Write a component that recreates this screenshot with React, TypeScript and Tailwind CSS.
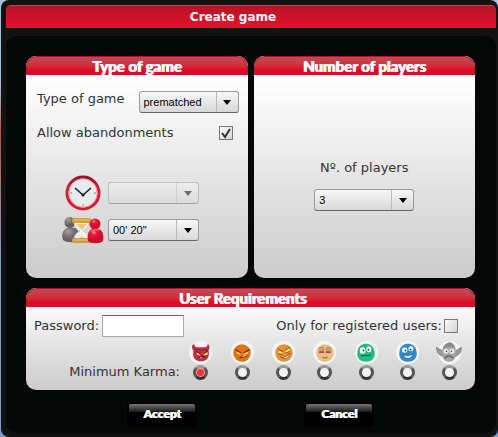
import React, { useState } from "react";

type Face = {
  name: string;
  drawing: React.ReactNode;
};

const karmaFaces: Face[] = [
  {
    name: "Devil",
    drawing: (
      <>
        <path d="M3 9C0 6 1 2 4 1c0 3 1 4 4 4h8c3 0 4-1 4-4 3 2 3 5 1 8 2 8-2 13-9 13S1 17 3 9z" fill="#bf3049" />
        <path d="M4 9c3-2 5-1 8 0 3-1 5-2 8 0" fill="none" stroke="#8f1d33" strokeWidth="1.2" />
        <path d="M7 11l4 2-1 2-3-1zM20 11l-5 2 1 2 4-1z" fill="#ffdf35" />
        <path d="M6 10l5 3M20 9l-5 4M9 18c3-2 6-2 9-1" fill="none" stroke="#6d1023" strokeWidth="1.2" />
        <path d="M11 17l1 2 1-2z" fill="#fff" />
      </>
    ),
  },
  {
    name: "Angry",
    drawing: (
      <>
        <circle cx="12" cy="12" r="10.5" fill="#df7414" />
        <path d="M5 10l6 2-1 2-4-1zM20 10l-6 2 1 2 4-1z" fill="#ffe14a" />
        <path d="M4 8l7 4M21 8l-7 4" stroke="#7b2f08" strokeWidth="1.6" />
        <path d="M9 18c3-2 5 0 9-3" fill="none" stroke="#7b260b" strokeWidth="1.6" />
        <path d="M13 16l4-1" stroke="#fff" />
      </>
    ),
  },
  {
    name: "Mischievous",
    drawing: (
      <>
        <circle cx="12" cy="12" r="10.5" fill="#e2943a" />
        <path d="M6 9l5 2-2 2-4-1zM13 9l5-3 1 4-4 2z" fill="#fff05a" />
        <path d="M5 7l6 4M13 9l6-4M5 13l5 1M14 12l5-2" stroke="#9a3d14" strokeWidth="1.2" />
        <path d="M8 17c5 1 8-1 11-5-1 6-5 9-11 5z" fill="#fff" stroke="#a23f1c" />
      </>
    ),
  },
  {
    name: "Calm",
    drawing: (
      <>
        <circle cx="12" cy="12" r="10.5" fill="#e6bf80" />
        <path d="M5 7h6v4H5zM13 7h6v4h-6z" fill="#cf9676" />
        <path d="M4 7c2-2 5-2 7 0M13 7c2-2 5-2 7 0" fill="none" stroke="#9d6038" />
        <path d="M5 11h6M13 11h6" stroke="#8d263a" strokeWidth="1.6" />
        <path d="M9 17c2 1 4 1 6 0" fill="none" stroke="#a95737" strokeWidth="1.4" />
      </>
    ),
  },
  {
    name: "Surprised",
    drawing: (
      <>
        <path d="M2 9c1-5 5-8 10-8s9 3 10 8c2 8-2 13.500-10 13.500S0 17 2 9z" fill="#1fbd83" />
        <ellipse cx="8" cy="9" rx="3.4" ry="4" fill="#fff" />
        <ellipse cx="15.500" cy="7.500" rx="3" ry="3.600" fill="#fff" />
        <circle cx="9" cy="9" r="1.100" fill="#123f35" />
        <circle cx="15" cy="8" r="1.100" fill="#123f35" />
        <path d="M6 16c4-3 8 1 12-2" fill="none" stroke="#08694a" strokeWidth="1.400" />
      </>
    ),
  },
  {
    name: "Happy",
    drawing: (
      <>
        <path d="M2 9c1-5 5-8 10-8s9 3 10 8c2 8-2 13.500-10 13.500S0 17 2 9z" fill="#308bc8" />
        <ellipse cx="8" cy="8.500" rx="3.200" ry="3.200" fill="#fff" />
        <ellipse cx="15.500" cy="7" rx="3" ry="3" fill="#fff" />
        <circle cx="9" cy="9" r="1.100" fill="#123f65" />
        <circle cx="15" cy="8" r="1.100" fill="#123f65" />
        <path d="M6 14c4 2 8 2 12-1-1 6-9 8-12 1z" fill="#fff" stroke="#15598c" strokeWidth="0.800" />
      </>
    ),
  },
  {
    name: "Elf",
    drawing: (
      <>
        <path d="M5 10L-3 5c0 6 3 10 8 11zM19 10l8-5c0 6-3 10-8 11z" fill="#999" stroke="#777" strokeWidth="0.800" />
        <path d="M4 9c0-4 3-8 9-10 4 1 7 4 7 9 2 9-2 14.500-8 14.500S2 17 4 9z" fill="#a5a5a5" />
        <path d="M5 7c0-4 4-7 8-8 3 1 5 3 6 7-5-2-9-2-14 1z" fill="#858585" />
        <ellipse cx="8.500" cy="10" rx="3" ry="3" fill="#eee" />
        <ellipse cx="15.500" cy="10" rx="3" ry="3" fill="#eee" />
        <circle cx="9" cy="10" r="1" fill="#444" />
        <circle cx="15" cy="10" r="1" fill="#444" />
        <path d="M7 18c3-3 7-3 10 0" fill="none" stroke="#5b5b5b" strokeWidth="1.300" />
      </>
    ),
  },
];

const ClockIcon = () => (
  <svg viewBox="0 0 36 36" className="size-9" aria-hidden="true">
    <defs>
      <linearGradient id="clock-rim" x1="0" y1="0" x2="0" y2="1">
        <stop offset="0" stopColor="#8e1528" />
        <stop offset="0.35" stopColor="#d01f38" />
        <stop offset="1" stopColor="#df1733" />
      </linearGradient>
    </defs>
    <circle cx="18" cy="18" r="16" fill="#e8ebeb" stroke="url(#clock-rim)" strokeWidth="3" />
    <circle cx="18" cy="18" r="14.2" fill="none" stroke="#f08494" strokeWidth="0.8" />
    <path d="M18 29v2M5 18h2M29 18h2" stroke="#a5a9aa" strokeWidth="1.5" />
    <path d="M10 13l8 7 8-7" fill="none" stroke="#1c2020" strokeWidth="1.6" />
    <circle cx="18" cy="20" r="1.6" fill="#1c2020" />
  </svg>
);

const TurnTimeIcon = () => (
  <svg viewBox="0 0 42 28" className="h-7 w-[42px]" aria-hidden="true">
    <defs>
      <radialGradient id="gray-pawn" cx="0.35" cy="0.25">
        <stop offset="0" stopColor="#aaa2a4" />
        <stop offset="0.5" stopColor="#817b7b" />
        <stop offset="1" stopColor="#686163" />
      </radialGradient>
      <radialGradient id="red-pawn" cx="0.4" cy="0.25">
        <stop offset="0" stopColor="#ff98a4" />
        <stop offset="0.35" stopColor="#e61b38" />
        <stop offset="1" stopColor="#d00a2b" />
      </radialGradient>
    </defs>
    <path d="M1 24c-2-6 0-10 4-12h8c4 2 5 7 4 12-3 3-13 3-16 0z" fill="url(#gray-pawn)" />
    <circle cx="8" cy="6.500" r="5.500" fill="url(#gray-pawn)" />
    <path d="M12 5h15c0 5-2 8-6 10 4 2 6 5 6 9H12c0-4 2-7 6-9-4-2-6-5-6-10z" fill="#eef1f1" stroke="#c9c9c5" />
    <path d="M14 8h11l-5 6zM20 20l5 4H14z" fill="#e3c98a" />
    <rect x="10" y="2" width="19" height="5" rx="1.500" fill="#cf9d42" />
    <rect x="10" y="22" width="19" height="5" rx="1.500" fill="#cf9d42" />
    <path d="M12 4h15M12 24h15" stroke="#ecc878" />
    <path d="M26 25c-1-6 0-10 4-12h7c4 2 5 7 4 12-3 3-12 3-15 0z" fill="url(#red-pawn)" />
    <circle cx="33" cy="8" r="5.500" fill="url(#red-pawn)" />
    <path d="M29 16c1-2 5-3 8-2" fill="none" stroke="#f4788a" strokeWidth="1.200" />
  </svg>
);

type DropDownProps = {
  id: string;
  label?: string;
  options: string[];
  disabled?: boolean;
};

const DropDown = ({ id, label, options, disabled }: DropDownProps) => (
  <div className={disabled ? "relative w-full opacity-50" : "relative w-full"}>
    <select
      id={id}
      aria-label={label}
      disabled={disabled}
      className="block h-[22px] w-full appearance-none rounded-[3px] border border-[#9b9b9b] border-b-[#666] bg-linear-to-b from-[#f8f8f8] to-[#d8d8d8] pl-1 pr-6 font-['Liberation_Sans'] text-[11px] text-black"
    >
      {options.map((option) => (
        <option key={option}>{option}</option>
      ))}
    </select>
    <span className="pointer-events-none absolute inset-y-px right-px flex w-[22px] items-center justify-center border-l border-[#bbb]">
      <svg viewBox="0 0 8 5" className="h-[5px] w-2" aria-hidden="true">
        <path d="M0 0h8L4 5z" fill="#000" />
      </svg>
    </span>
  </div>
);

type PanelProps = {
  title: string;
  titleClass?: string;
  children: React.ReactNode;
};

const Panel = ({ title, titleClass = "", children }: PanelProps) => (
  <section className="overflow-hidden rounded-[10px] bg-linear-to-b from-white from-10% to-[#cbcbcb]">
    <h2
      className={`flex h-[19px] items-center justify-center rounded-t-[10px] border-x border-t border-[#b51328] bg-linear-to-b from-[#c04a58] to-[#d90d27] to-70% font-[Lato] text-[15px] leading-5 font-black text-white text-shadow-[1px_0_0_#fff] ${titleClass}`}
    >
      {title}
    </h2>
    {children}
  </section>
);

const checkboxClass =
  "size-[14px] shrink-0 appearance-none border border-[#777] bg-linear-to-br from-[#fafafa] to-[#d5d5d5]";

const buttonClass =
  "h-[25px] w-[70px] rounded-[4px] border-2 border-black bg-linear-to-b from-[#777] via-[#222] via-35% to-black to-45% pb-px font-[Lato] text-[12px] leading-4 font-black text-white text-shadow-[1px_0_0_#fff]";

const App = () => {
  const [allowAbandon, setAllowAbandon] = useState(true);
  const [onlyRegistered, setOnlyRegistered] = useState(false);
  const [karma, setKarma] = useState("Devil");

  return (
    <div className="min-h-screen bg-linear-to-b from-[#a9bedb] from-20% via-[#b5533f] via-30% to-[#7f9cc6] to-60% pl-px font-['DejaVu_Sans',sans-serif] text-[13px] leading-4 text-[#333]">
      <form
        className="flex min-h-screen flex-col rounded-[8px] bg-[#121212] pt-[5px] pr-[2px] pb-1 pl-[5px]"
        onSubmit={(e) => e.preventDefault()}
      >
        <h1 className="flex h-[23px] items-center justify-center rounded-t-[5px] border-t border-[#cc4250] bg-linear-to-b from-[#b31527] to-[#eb0b29] pr-9 text-[12px] font-bold text-white">
          Create game
        </h1>

        <div className="mt-2 flex-1 rounded-[10px] bg-[#050606] pt-5 pr-[21px] pl-5">
          <div className="grid grid-cols-2 gap-[6px]">
            <Panel title="Type of game">
              <div className="h-[203px] pt-4 pr-[9px] pl-[11px]">
                <div className="flex items-start justify-between">
                  <label htmlFor="game-type">Type of game</label>
                  <div className="w-[100px]">
                    <DropDown id="game-type" options={["prematched", "open"]} />
                  </div>
                </div>
                <div className="mt-3 flex items-center justify-between pr-[6px]">
                  <label htmlFor="abandon">Allow abandonments</label>
                  <span className="relative flex">
                    <input
                      id="abandon"
                      type="checkbox"
                      className={checkboxClass}
                      checked={allowAbandon}
                      onChange={(e) => setAllowAbandon(e.target.checked)}
                    />
                    {allowAbandon && (
                      <svg viewBox="0 0 14 14" className="pointer-events-none absolute inset-0" aria-hidden="true">
                        <path d="M3 7l3 4 5-8" fill="none" stroke="#333" strokeWidth="2" />
                      </svg>
                    )}
                  </span>
                </div>
                <div className="mt-[34px] grid grid-cols-[42px_91px] items-center gap-x-1 gap-y-[5px] pl-[25px]">
                  <div className="flex justify-center">
                    <ClockIcon />
                  </div>
                  <DropDown id="game-time" label="Game time" options={[""]} disabled />
                  <TurnTimeIcon />
                  <DropDown id="turn-time" label="Turn time" options={["00' 20\"", "00' 30\""]} />
                </div>
              </div>
            </Panel>

            <Panel title="Number of players">
              <div className="flex h-[203px] flex-col items-center pt-[85px]">
                <label htmlFor="players">Nº. of players</label>
                <div className="mt-[13px] w-[100px]">
                  <DropDown id="players" options={["3", "4", "5"]} />
                </div>
              </div>
            </Panel>
          </div>

          <div className="mt-[10px]">
            <Panel title="User Requirements" titleClass="pr-4">
              <div className="h-[83px] pt-2 pr-[5px] pl-2">
                <div className="flex items-center justify-between pr-3">
                  <div className="flex items-center gap-[3px]">
                    <label htmlFor="password">Password:</label>
                    <input
                      id="password"
                      type="password"
                      className="h-[22px] w-[82px] border border-[#aaa] border-t-[#666] bg-white px-1"
                    />
                  </div>
                  <div className="flex items-center gap-[2px]">
                    <label htmlFor="registered">Only for registered users:</label>
                    <input
                      id="registered"
                      type="checkbox"
                      className={checkboxClass}
                      checked={onlyRegistered}
                      onChange={(e) => setOnlyRegistered(e.target.checked)}
                    />
                  </div>
                </div>
                <fieldset className="mt-1 flex items-end">
                  <span id="karma-label" className="flex-1 text-right">
                    Minimum Karma:
                  </span>
                  <div className="grid w-[290px] grid-cols-7" role="radiogroup" aria-labelledby="karma-label">
                    {karmaFaces.map((face) => (
                      <label key={face.name} className="flex flex-col items-center gap-px">
                        <span className="flex size-[23px] items-center justify-center rounded-full bg-[#f5f5f5]">
                          <svg viewBox="0 0 24 24" className="size-5 overflow-visible" aria-hidden="true">
                            {face.drawing}
                          </svg>
                        </span>
                        <input
                          type="radio"
                          name="karma"
                          aria-label={face.name}
                          checked={karma === face.name}
                          onChange={() => setKarma(face.name)}
                          className="size-[15px] appearance-none rounded-full border-3 border-[#555] border-t-[#999] border-b-[#333] bg-[#f2f2f2] checked:bg-[#ee3434] checked:inset-ring checked:inset-ring-[#f5aaaa]"
                        />
                      </label>
                    ))}
                  </div>
                </fieldset>
              </div>
            </Panel>
          </div>

          <div className="mt-3 grid grid-cols-[70px_70px] justify-center gap-[107px]">
            <button type="submit" className={buttonClass}>
              Accept
            </button>
            <button type="button" className={buttonClass}>
              Cancel
            </button>
          </div>
        </div>
      </form>
    </div>
  );
};

export default App;
